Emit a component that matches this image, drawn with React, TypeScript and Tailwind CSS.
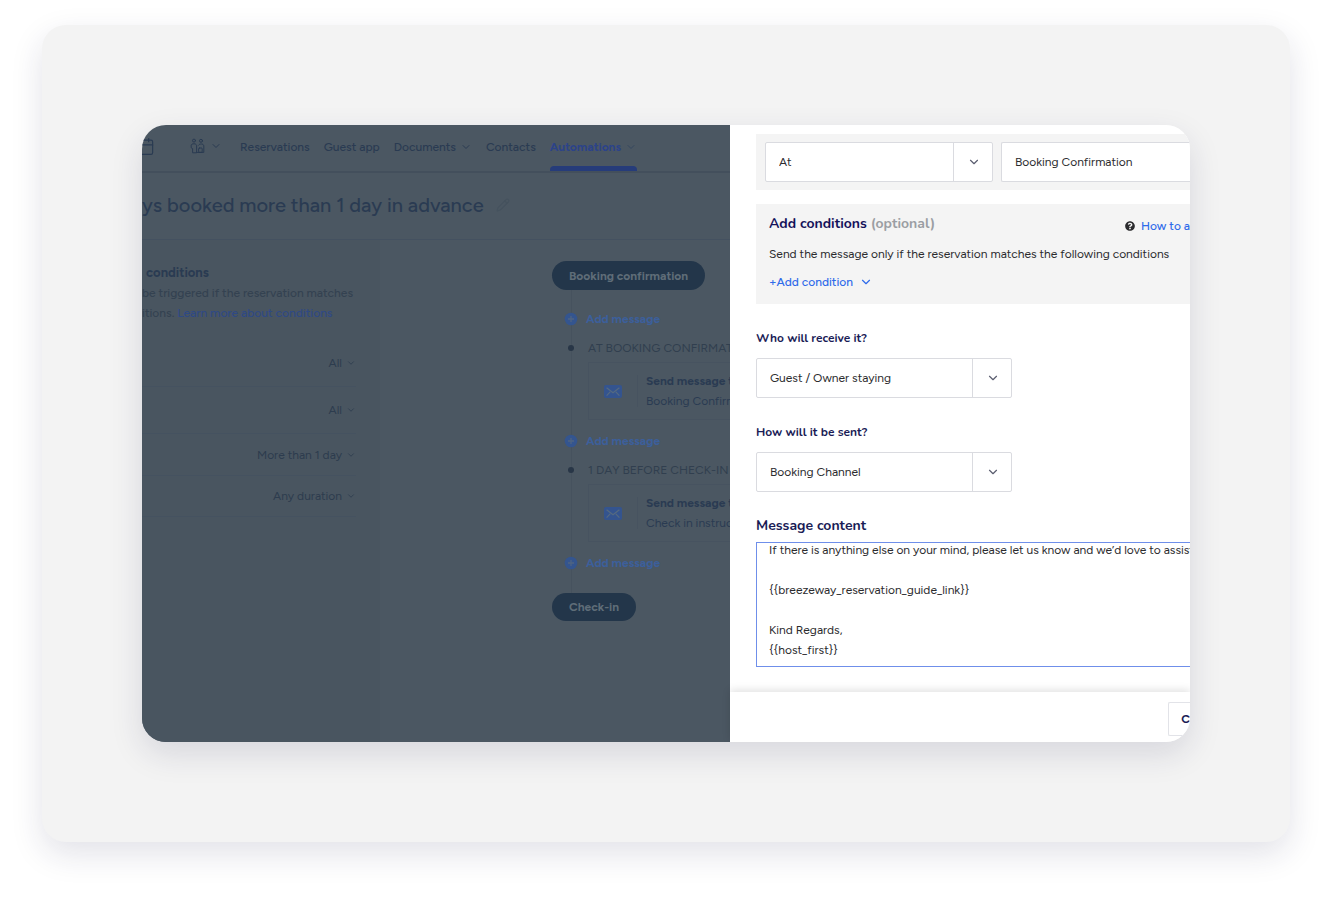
import { useEffect, useRef } from "react";
import { Calendar, ChevronDown, Pencil } from "lucide-react";
import { FaQuestionCircle } from "react-icons/fa";

const filters = [
  { value: "All", row: "h-[47px]" },
  { value: "All", row: "h-[47px]" },
  { value: "More than 1 day", row: "h-[42px]" },
  { value: "Any duration", row: "h-[41px]" },
];

const messages = [
  { when: "AT BOOKING CONFIRMAT", title: "Send message t", text: "Booking Confirm" },
  { when: "1 DAY BEFORE CHECK-IN", title: "Send message t", text: "Check in instruc" },
];

const content = `If there is anything else on your mind, please let us know and we’d love to assist

{{breezeway_reservation_guide_link}}

Kind Regards,
{{host_first}}`;

const GuestsIcon = () => (
  <svg
    width="16"
    height="16"
    viewBox="0 0 16 16"
    fill="none"
    stroke="currentColor"
    strokeWidth="1"
    strokeLinecap="round"
    strokeLinejoin="round"
  >
    <circle cx="4" cy="2.6" r="1.5" />
    <circle cx="11" cy="2.8" r="1.5" />
    <path d="M2.6 14.4V10.6L1.2 9.8V7.4C1.2 6.2 2.6 5.8 4 5.8S6.6 6.4 6.6 7.6V14.4Z" />
    <path d="M8.6 7.2C9.2 6.2 10.2 6 11.4 6S13.8 6.6 13.8 8V14.4H6.6" />
    <rect x="8.6" y="10" width="3.6" height="4.4" rx="0.8" />
  </svg>
);

const PlusIcon = () => (
  <svg width="14" height="14" viewBox="0 0 14 14" className="shrink-0">
    <circle cx="7" cy="7" r="6.3" fill="#34558f" />
    <path d="M7 4V10M4 7H10" stroke="#4f6482" strokeWidth="1.3" />
  </svg>
);

const MailIcon = () => (
  <svg width="18" height="13" viewBox="0 0 18 13">
    <rect width="18" height="13" rx="2" fill="#34548f" />
    <path
      d="M2.6 2.8L9 7.8L15.4 2.8M2.6 10.6L6.2 6.8M15.4 10.6L11.8 6.8"
      fill="none"
      stroke="#566a80"
      strokeWidth="1.2"
    />
  </svg>
);

const AddMessage = () => (
  <button type="button" className="-ml-2 flex h-[29px] items-center gap-2 font-bold text-[#3c5f9b]">
    <PlusIcon />
    Add message
  </button>
);

const Select = ({ id, label, value, className }) => (
  <div className={`relative h-10 ${className}`}>
    <select
      id={id}
      aria-label={label}
      className="h-full w-full appearance-none rounded-xs border border-[#dadbe0] bg-white pr-12 pl-[13px] text-xs text-[#2b2b2e]"
    >
      <option>{value}</option>
    </select>
    <span className="pointer-events-none absolute inset-y-0 right-0 flex w-10 items-center justify-center border-l border-[#dadbe0]">
      <ChevronDown size={14} strokeWidth={2} className="text-[#5b5e70]" />
    </span>
  </div>
);

const Background = () => (
  <div className="flex min-w-0 flex-1 flex-col overflow-hidden bg-[#4b5762] text-xs whitespace-nowrap text-[#2a3b52]">
    <header className="flex h-12 items-stretch border-b-2 border-[#434f5c] font-medium">
      <div className="flex w-[98px] shrink-0 items-center pb-1">
        <Calendar size={19} strokeWidth={1.5} className="-ml-1.5" />
        <button type="button" aria-label="Guests" className="ml-[35px] flex items-center gap-1">
          <GuestsIcon />
          <ChevronDown size={12} />
        </button>
      </div>
      <nav className="flex gap-3.5">
        <a href="#" className="flex items-center pb-0.5">Reservations</a>
        <a href="#" className="flex items-center pb-0.5">Guest app</a>
        <a href="#" className="flex items-center gap-1 pb-0.5">
          Documents
          <ChevronDown size={12} />
        </a>
        <a href="#" className="flex items-center pb-0.5">Contacts</a>
        <a href="#" className="flex flex-col font-bold text-[#2c4389]">
          <span className="flex flex-1 items-center gap-1 pt-[3px]">
            Automations
            <ChevronDown size={12} className="text-[#35475f]" />
          </span>
          <span className="h-[5px] rounded-t bg-[#263c7a]" />
        </a>
      </nav>
    </header>

    <div className="flex h-[67px] items-center gap-3 border-b border-[#445160] pb-0.5">
      <h1 className="text-xl font-medium">ys booked more than 1 day in advance</h1>
      <button type="button" aria-label="Edit name">
        <Pencil size={14} className="text-[#45525e]" />
      </button>
    </div>

    <div className="flex flex-1">
      <aside className="w-[238px] shrink-0 bg-[#495560] pt-[23px] pr-6">
        <h2 className="pl-1 text-[13px] leading-5 font-bold">conditions</h2>
        <p className="leading-5 font-medium text-[#344251]">
          be triggered if the reservation matches
          <br />
          itions.{" "}
          <a href="#" className="text-[#2f4985]">
            Learn more about conditions
          </a>
        </p>
        <ul className="pt-[17px]">
          {filters.map((filter, i) => (
            <li key={i} className={`flex items-center justify-end border-b border-[#455260] ${filter.row}`}>
              <button type="button" className="flex items-center gap-1 text-[#2d3c4e]">
                {filter.value}
                <ChevronDown size={10} />
              </button>
            </li>
          ))}
        </ul>
      </aside>

      <main className="min-w-0 flex-1 pt-[21px] pl-[172px]">
        <span className="inline-flex h-[29px] items-center rounded-full bg-[#23364a] px-[17px] font-bold text-[#5f6d78]">
          Booking confirmation
        </span>
        <div className="ml-[19px] border-l border-[#46525e] pt-3.5 pb-4">
          {messages.map((message) => (
            <section key={message.when} className="mb-1.5">
              <AddMessage />
              <h3 className="-ml-1 flex h-[29px] items-center gap-3.5 text-[#313f4f]">
                <span className="size-1.5 shrink-0 rounded-full bg-[#283647]" />
                {message.when}
              </h3>
              <div className="ml-4 flex h-[58px] items-center border border-r-0 border-[#475360]">
                <span className="flex h-8 w-[49px] shrink-0 items-center justify-center border-r border-[#475360]">
                  <MailIcon />
                </span>
                <p className="pl-2 leading-5">
                  <strong className="font-bold">{message.title}</strong>
                  <br />
                  {message.text}
                </p>
              </div>
            </section>
          ))}
          <AddMessage />
        </div>
        <span className="inline-flex h-7 items-center rounded-full bg-[#23364a] px-[17px] font-bold text-[#5f6d78]">
          Check-in
        </span>
      </main>
    </div>
  </div>
);

const Drawer = () => {
  const contentRef = useRef(null);

  // keep the end of the message in view
  useEffect(() => {
    contentRef.current.scrollTop = contentRef.current.scrollHeight;
  }, []);

  return (
    <form className="flex w-[460px] shrink-0 flex-col bg-white text-xs text-[#2b2b2e]">
      <div className="flex-1 pt-[9px] pb-[25px] pl-[26px]">
        <div className="flex gap-2 bg-[#f4f4f4] py-2 pl-[9px]">
          <Select id="when" label="When" value="At" className="w-[228px] shrink-0" />
          <select
            aria-label="Event"
            className="h-10 min-w-0 flex-1 appearance-none rounded-l-xs border border-r-0 border-[#dadbe0] bg-white pl-[13px]"
          >
            <option>Booking Confirmation</option>
          </select>
        </div>

        <div className="mt-3.5 bg-[#f4f4f4] pt-2.5 pb-3 pl-[13px] leading-5">
          <div className="flex justify-between whitespace-nowrap">
            <h2 className="font-['Nunito','Figtree','Inter',sans-serif] text-sm leading-5 font-bold text-[#14125a]">
              Add conditions <span className="text-[#9b9ea3]">(optional)</span>
            </h2>
            <a href="#" className="flex items-center gap-1.5 pt-0.5 font-medium text-[#2f6bea]">
              <FaQuestionCircle size={10} className="text-[#2b2b2e]" />
              How to a
            </a>
          </div>
          <p className="mt-2 whitespace-nowrap">
            Send the message only if the reservation matches the following conditions
          </p>
          <button type="button" className="mt-2 flex items-center gap-1.5 font-medium text-[#2f6bea]">
            +Add condition
            <ChevronDown size={14} strokeWidth={2} />
          </button>
        </div>

        <div className="font-['Nunito','Figtree','Inter',sans-serif] font-bold text-[#1a1c56]">
          <label htmlFor="recipient" className="mt-6 block leading-5">
            Who will receive it?
          </label>
        </div>
        <Select id="recipient" value="Guest / Owner staying" className="mt-2.5 w-64" />

        <div className="font-['Nunito','Figtree','Inter',sans-serif] font-bold text-[#1a1c56]">
          <label htmlFor="channel" className="mt-6 block leading-5">
            How will it be sent?
          </label>
        </div>
        <Select id="channel" value="Booking Channel" className="mt-2.5 w-64" />

        <div className="font-['Nunito','Figtree','Inter',sans-serif] text-sm font-bold text-[#1a1c56]">
          <label htmlFor="content" className="mt-6 block leading-5">
            Message content
          </label>
        </div>
        <textarea
          ref={contentRef}
          id="content"
          defaultValue={content}
          className="mt-1.5 block h-[125px] w-full resize-none overflow-hidden border border-r-0 border-[#6f8fea] py-1.5 pl-3 leading-5 whitespace-pre outline-none"
        />
      </div>

      <footer className="flex justify-end pt-2.5 pb-1.5 shadow-[0_-2px_8px_rgba(0,0,0,0.12)]">
        <button
          type="button"
          className="h-[34px] rounded-l-xs border border-r-0 border-[#e2e3e8] pl-3 font-bold text-[#1a1c56]"
        >
          C
        </button>
      </footer>
    </form>
  );
};

export default function App() {
  return (
    <div className="bg-white pt-[25px] pr-[43px] pb-[59px] pl-[42px] font-['Figtree','Inter',sans-serif]">
      <div className="rounded-3xl bg-[#f3f3f3] p-[100px] shadow-[0_12px_32px_rgba(30,30,80,0.13)]">
        <div className="flex overflow-hidden rounded-3xl shadow-[0_12px_32px_rgba(30,30,80,0.13)]">
          <Background />
          <Drawer />
        </div>
      </div>
    </div>
  );
}
